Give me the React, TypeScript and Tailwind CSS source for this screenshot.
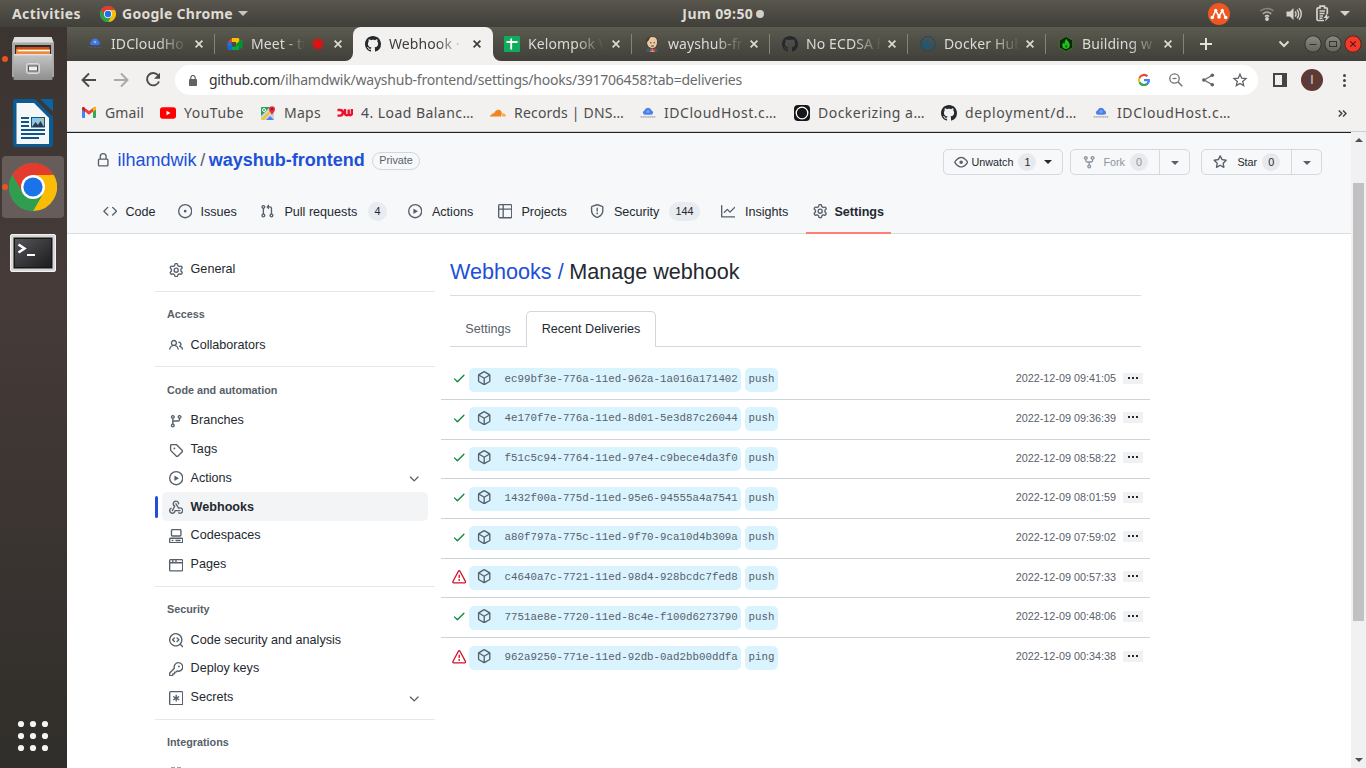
import React, { useLayoutEffect, useRef } from "react";
import type { ReactNode } from "react";

const P = {
  code: "M4.72 3.22a.75.75 0 011.06 1.06L2.06 8l3.72 3.72a.75.75 0 11-1.06 1.06L.47 8.53a.75.75 0 010-1.06l4.25-4.25zm6.56 0a.75.75 0 10-1.06 1.06L13.94 8l-3.72 3.72a.75.75 0 101.06 1.06l4.25-4.25a.75.75 0 000-1.06l-4.25-4.25z",
  issue: "M8 9.5a1.5 1.5 0 100-3 1.5 1.5 0 000 3zM8 0a8 8 0 100 16A8 8 0 008 0zM1.5 8a6.5 6.5 0 1113 0 6.5 6.5 0 01-13 0z",
  pull: "M7.177 3.073L9.573.677A.25.25 0 0110 .854v4.792a.25.25 0 01-.427.177L7.177 3.427a.25.25 0 010-.354zM3.75 2.5a.75.75 0 100 1.5.75.75 0 000-1.5zm-2.25.75a2.25 2.25 0 113 2.122v5.256a2.251 2.251 0 11-1.5 0V5.372A2.25 2.25 0 011.5 3.25zM11 2.5h-1V4h1a1 1 0 011 1v5.628a2.251 2.251 0 101.5 0V5A2.5 2.5 0 0011 2.5zm1 10.25a.75.75 0 111.5 0 .75.75 0 01-1.5 0zM3.75 12a.75.75 0 100 1.5.75.75 0 000-1.5z",
  play: "M1.5 8a6.5 6.5 0 1113 0 6.5 6.5 0 01-13 0zM8 0a8 8 0 100 16A8 8 0 008 0zM6.379 5.227A.25.25 0 006 5.442v5.117a.25.25 0 00.379.214l4.264-2.559a.25.25 0 000-.428L6.379 5.227z",
  table: "M1.75 0A1.75 1.75 0 000 1.75v12.5C0 15.216.784 16 1.75 16h12.5A1.75 1.75 0 0016 14.25V1.75A1.75 1.75 0 0014.25 0H1.75zM1.5 1.75a.25.25 0 01.25-.25H5V5H1.5V1.75zM1.5 6.5v7.75c0 .138.112.25.25.25H5v-8H1.5zm5 0v8h7.75a.25.25 0 00.25-.25V6.5h-8zm8-1.5V1.75a.25.25 0 00-.25-.25H6.5V5h8z",
  shield: "M7.467.133a1.75 1.75 0 011.066 0l5.25 1.68A1.75 1.75 0 0115 3.48V7c0 1.566-.32 3.182-1.303 4.682-.983 1.498-2.585 2.813-5.032 3.855a1.7 1.7 0 01-1.33 0c-2.447-1.042-4.049-2.357-5.032-3.855C1.32 10.182 1 8.566 1 7V3.48a1.75 1.75 0 011.217-1.667l5.25-1.68zm.61 1.429a.25.25 0 00-.153 0l-5.25 1.68a.25.25 0 00-.174.238V7c0 1.358.275 2.666 1.057 3.86.784 1.194 2.121 2.34 4.366 3.297a.2.2 0 00.154 0c2.245-.956 3.582-2.104 4.366-3.298C13.225 9.666 13.5 8.36 13.5 7V3.48a.25.25 0 00-.174-.237l-5.25-1.68zM9 10.5a1 1 0 11-2 0 1 1 0 012 0zm-.25-5.75a.75.75 0 10-1.5 0v3a.75.75 0 001.5 0v-3z",
  graph: "M1.5 1.75a.75.75 0 00-1.5 0v12.5c0 .414.336.75.75.75h14.5a.75.75 0 000-1.5H1.5V1.75zm14.28 2.53a.75.75 0 00-1.06-1.06L10 7.94 7.53 5.47a.75.75 0 00-1.06 0L3.22 8.72a.75.75 0 001.06 1.06L7 7.06l2.47 2.47a.75.75 0 001.06 0l5.25-5.25z",
  gear: "M8 0a8.2 8.2 0 0 1 .701.031C9.444.095 9.99.645 10.16 1.29l.288 1.107c.018.066.079.158.212.224.231.114.454.243.668.386.123.082.233.09.299.071l1.103-.303c.644-.176 1.392.021 1.82.63.27.385.506.792.704 1.218.315.675.111 1.422-.364 1.891l-.814.806c-.049.048-.098.147-.088.294.016.257.016.515 0 .772-.01.147.038.246.088.294l.814.806c.475.469.679 1.216.364 1.891a7.977 7.977 0 0 1-.704 1.217c-.428.61-1.176.807-1.82.63l-1.102-.302c-.067-.019-.177-.011-.3.071a5.909 5.909 0 0 1-.668.386c-.133.066-.194.158-.211.224l-.29 1.106c-.168.646-.715 1.196-1.458 1.26a8.006 8.006 0 0 1-1.402 0c-.743-.064-1.289-.614-1.458-1.26l-.289-1.106c-.018-.066-.079-.158-.212-.224a5.738 5.738 0 0 1-.668-.386c-.123-.082-.233-.09-.299-.071l-1.103.303c-.644.176-1.392-.021-1.82-.63a8.12 8.12 0 0 1-.704-1.218c-.315-.675-.111-1.422.363-1.891l.815-.806c.05-.048.098-.147.088-.294a6.214 6.214 0 0 1 0-.772c.01-.147-.038-.246-.088-.294l-.815-.806C.635 6.045.431 5.298.746 4.623a7.92 7.92 0 0 1 .704-1.217c.428-.61 1.176-.807 1.82-.63l1.102.302c.067.019.177.011.3-.071.214-.143.437-.272.668-.386.133-.066.194-.158.211-.224l.29-1.106C6.009.645 6.556.095 7.299.03 7.53.01 7.764 0 8 0Zm-.571 1.525c-.036.003-.108.036-.137.146l-.289 1.105c-.147.561-.549.967-.998 1.189-.173.086-.34.183-.5.29-.417.278-.97.423-1.529.27l-1.103-.303c-.109-.03-.175.016-.195.045-.22.312-.412.644-.573.99-.014.031-.021.11.059.19l.815.806c.411.406.562.957.53 1.456a4.709 4.709 0 0 0 0 .582c.032.499-.119 1.05-.53 1.456l-.815.806c-.081.08-.073.159-.059.19.162.346.353.677.573.989.02.03.085.076.195.046l1.102-.303c.56-.153 1.113-.008 1.53.27.161.107.328.204.501.29.447.222.85.629.997 1.189l.289 1.105c.029.109.101.143.137.146a6.6 6.6 0 0 0 1.142 0c.036-.003.108-.036.137-.146l.289-1.105c.147-.561.549-.967.998-1.189.173-.086.34-.183.5-.29.417-.278.97-.423 1.529-.27l1.103.303c.109.029.175-.016.195-.045.22-.313.411-.644.573-.99.014-.031.021-.11-.059-.19l-.815-.806c-.411-.406-.562-.957-.53-1.456a4.709 4.709 0 0 0 0-.582c-.032-.499.119-1.05.53-1.456l.815-.806c.081-.08.073-.159.059-.19a6.464 6.464 0 0 0-.573-.989c-.02-.03-.085-.076-.195-.046l-1.102.303c-.56.153-1.113.008-1.53-.27a4.44 4.44 0 0 0-.501-.29c-.447-.222-.85-.629-.997-1.189l-.289-1.105c-.029-.11-.101-.143-.137-.146a6.6 6.6 0 0 0-1.142 0ZM11 8a3 3 0 1 1-6 0 3 3 0 0 1 6 0ZM9.5 8a1.5 1.5 0 1 0-3.001.001A1.5 1.5 0 0 0 9.5 8Z",
  lock: "M4 4v2h-.25A1.75 1.75 0 002 7.75v5.5c0 .966.784 1.75 1.75 1.75h8.5A1.75 1.75 0 0014 13.25v-5.5A1.75 1.75 0 0012.25 6H12V4a4 4 0 10-8 0zm6.5 2V4a2.5 2.5 0 10-5 0v2h5zM12 7.5h.25a.25.25 0 01.25.25v5.5a.25.25 0 01-.25.25h-8.5a.25.25 0 01-.25-.25v-5.5a.25.25 0 01.25-.25H12z",
  people: "M2 5.5a3.5 3.5 0 1 1 5.898 2.549 5.508 5.508 0 0 1 3.034 4.084.75.75 0 1 1-1.482.235 4 4 0 0 0-7.9 0 .75.75 0 0 1-1.482-.236A5.507 5.507 0 0 1 3.102 8.05 3.493 3.493 0 0 1 2 5.5ZM11 4a3.001 3.001 0 0 1 2.22 5.018 5.01 5.01 0 0 1 2.56 3.012.749.749 0 0 1-.885.954.752.752 0 0 1-.549-.514 3.507 3.507 0 0 0-2.522-2.372.75.75 0 0 1-.574-.73v-.352a.75.75 0 0 1 .416-.672A1.5 1.5 0 0 0 11 5.5.75.75 0 0 1 11 4Zm-5.5-.5a2 2 0 1 0-.001 3.999A2 2 0 0 0 5.5 3.5Z",
  branch: "M11.75 2.5a.75.75 0 100 1.5.75.75 0 000-1.5zm-2.25.75a2.25 2.25 0 113 2.122V6A2.5 2.5 0 0110 8.5H6a1 1 0 00-1 1v1.128a2.251 2.251 0 11-1.5 0V5.372a2.25 2.25 0 111.5 0v1.836A2.492 2.492 0 016 7h4a1 1 0 001-1v-.628A2.25 2.25 0 019.5 3.25zM4.25 12a.75.75 0 100 1.5.75.75 0 000-1.5zM3.5 3.25a.75.75 0 111.5 0 .75.75 0 01-1.5 0z",
  tag: "M1 7.775V2.75C1 1.784 1.784 1 2.75 1h5.025c.464 0 .91.184 1.238.513l6.25 6.25a1.75 1.75 0 0 1 0 2.474l-5.026 5.026a1.75 1.75 0 0 1-2.474 0l-6.25-6.25A1.752 1.752 0 0 1 1 7.775Zm1.5 0c0 .066.026.13.073.177l6.25 6.25a.25.25 0 0 0 .354 0l5.025-5.025a.25.25 0 0 0 0-.354l-6.25-6.25a.25.25 0 0 0-.177-.073H2.75a.25.25 0 0 0-.25.25ZM6 5a1 1 0 1 1 0 2 1 1 0 0 1 0-2Z",
  webhook: "M5.5 4.25a2.25 2.25 0 0 1 4.5 0 .75.75 0 0 0 1.5 0 3.75 3.75 0 1 0-6.14 2.889l-2.272 4.258a.75.75 0 0 0 1.324.706L7 7.25a.75.75 0 0 0-.309-1.015A2.25 2.25 0 0 1 5.5 4.25ZM7.364 3.607a.75.75 0 0 1 1.03.257l2.608 4.349a3.75 3.75 0 1 1-.628 6.785.75.75 0 0 1 .752-1.299 2.25 2.25 0 1 0-.033-3.88.75.75 0 0 1-1.03-.256L7.107 4.636a.75.75 0 0 1 .257-1.03ZM2.9 8.776A.75.75 0 0 1 2.625 9.8 2.25 2.25 0 1 0 6 11.75a.75.75 0 0 1 .75-.751h5.5a.75.75 0 0 1 0 1.5H7.425a3.751 3.751 0 1 1-5.55-3.998.75.75 0 0 1 1.024.274Z",
  codespaces: "M0 11.25c0-.966.784-1.75 1.75-1.75h12.5c.966 0 1.75.784 1.75 1.75v3A1.75 1.75 0 0 1 14.25 16H1.75A1.75 1.75 0 0 1 0 14.25Zm2-9.5C2 .784 2.784 0 3.75 0h8.5C13.216 0 14 .784 14 1.75v5a1.75 1.75 0 0 1-1.75 1.75h-8.5A1.75 1.75 0 0 1 2 6.75Zm1.75-.25a.25.25 0 0 0-.25.25v5c0 .138.112.25.25.25h8.5a.25.25 0 0 0 .25-.25v-5a.25.25 0 0 0-.25-.25Zm-2 9.5a.25.25 0 0 0-.25.25v3c0 .138.112.25.25.25h12.5a.25.25 0 0 0 .25-.25v-3a.25.25 0 0 0-.25-.25ZM7 12.75a.75.75 0 0 1 .75-.75h4.5a.75.75 0 0 1 0 1.5h-4.5a.75.75 0 0 1-.75-.75Zm-4 0a.75.75 0 0 1 .75-.75h.5a.75.75 0 0 1 0 1.5h-.5a.75.75 0 0 1-.75-.75Z",
  browser: "M0 2.75C0 1.784.784 1 1.75 1h12.5c.966 0 1.75.784 1.75 1.75v10.5A1.75 1.75 0 0 1 14.25 15H1.75A1.75 1.75 0 0 1 0 13.25ZM14.5 6h-13v7.25c0 .138.112.25.25.25h12.5a.25.25 0 0 0 .25-.25Zm-6-3.5v2h6V2.75a.25.25 0 0 0-.25-.25ZM5 2.5v2h2v-2Zm-3.25 0a.25.25 0 0 0-.25.25V4.5h2v-2Z",
  codescan: "M8.47 4.97a.75.75 0 0 0 0 1.06L9.94 7.5 8.47 8.97a.75.75 0 1 0 1.06 1.06l2-2a.75.75 0 0 0 0-1.06l-2-2a.75.75 0 0 0-1.06 0ZM6.53 6.03a.75.75 0 0 0-1.06-1.06l-2 2a.75.75 0 0 0 0 1.06l2 2a.75.75 0 1 0 1.06-1.06L5.06 7.5l1.47-1.47ZM12.246 13.307a7.501 7.501 0 1 1 1.06-1.06l2.474 2.473a.749.749 0 1 1-1.06 1.06l-2.474-2.473ZM1.5 7.5a6.002 6.002 0 0 0 3.608 5.504 6.002 6.002 0 0 0 6.486-1.117.748.748 0 0 1 .292-.293A6 6 0 1 0 1.5 7.5Z",
  key: "M10.5 0a5.499 5.499 0 1 1-1.288 10.848l-.932.932a.749.749 0 0 1-.53.22H7v.75a.749.749 0 0 1-.22.53l-.5.5a.749.749 0 0 1-.53.22H5v.75a.749.749 0 0 1-.22.53l-.5.5a.749.749 0 0 1-.53.22h-2A1.75 1.75 0 0 1 0 14.25v-2c0-.199.079-.389.22-.53l4.932-4.932A5.5 5.5 0 0 1 10.5 0Zm-4 5.5c-.001.431.069.86.205 1.269a.75.75 0 0 1-.181.768L1.5 12.56v1.69c0 .138.112.25.25.25h1.69l.06-.06v-1.19a.75.75 0 0 1 .75-.75h1.19l.06-.06v-1.19a.75.75 0 0 1 .75-.75h1.19l1.023-1.025a.75.75 0 0 1 .768-.18A4 4 0 1 0 6.5 5.5ZM11 6a1 1 0 1 1 0-2 1 1 0 0 1 0 2Z",
  asterisk: "M1.75 0A1.75 1.75 0 000 1.75v12.5C0 15.216.784 16 1.75 16h12.5A1.75 1.75 0 0016 14.25V1.75A1.75 1.75 0 0014.25 0H1.75zm-.25 1.75a.25.25 0 01.25-.25h12.5a.25.25 0 01.25.25v12.5a.25.25 0 01-.25.25H1.75a.25.25 0 01-.25-.25V1.75zM8 4a.75.75 0 01.75.75V6.7l1.69-.975a.75.75 0 01.75 1.3L9.5 8l1.69.976a.75.75 0 01-.75 1.298L8.75 9.3v1.951a.75.75 0 01-1.5 0V9.299l-1.69.976a.75.75 0 01-.75-1.3L6.5 8l-1.69-.975a.75.75 0 01.75-1.3l1.69.976V4.75A.75.75 0 018 4z",
  box: "M8.878.392a1.75 1.75 0 00-1.756 0l-5.25 3.045A1.75 1.75 0 001 4.951v6.098c0 .624.332 1.2.872 1.514l5.25 3.045a1.75 1.75 0 001.756 0l5.25-3.045c.54-.313.872-.89.872-1.514V4.951c0-.624-.332-1.2-.872-1.514L8.878.392zM7.875 1.69a.25.25 0 01.25 0l4.63 2.685L8 7.133 3.245 4.375l4.63-2.685zM2.5 5.677v5.372c0 .09.047.171.125.216l4.625 2.683V8.432L2.5 5.677zm6.25 8.271l4.625-2.683a.25.25 0 00.125-.216V5.677L8.75 8.432v5.516z",
  alert: "M8.22 1.754a.25.25 0 00-.44 0L1.698 13.132a.25.25 0 00.22.368h12.164a.25.25 0 00.22-.368L8.22 1.754zm-1.763-.707c.659-1.234 2.427-1.234 3.086 0l6.082 11.378A1.75 1.75 0 0114.082 15H1.918a1.75 1.75 0 01-1.543-2.575L6.457 1.047zM9 11a1 1 0 11-2 0 1 1 0 012 0zm-.25-5.25a.75.75 0 00-1.5 0v2.5a.75.75 0 001.5 0v-2.5z",
  check: "M13.78 4.22a.75.75 0 010 1.06l-7.25 7.25a.75.75 0 01-1.06 0L2.22 9.28a.75.75 0 011.06-1.06L6 10.94l6.72-6.72a.75.75 0 011.06 0z",
  eye: "M8 2c1.981 0 3.671.992 4.933 2.078 1.27 1.091 2.187 2.345 2.637 3.023a1.62 1.62 0 0 1 0 1.798c-.45.678-1.367 1.932-2.637 3.023C11.67 13.008 9.981 14 8 14c-1.981 0-3.671-.992-4.933-2.078C1.797 10.83.88 9.576.43 8.898a1.62 1.62 0 0 1 0-1.798c.45-.677 1.367-1.931 2.637-3.022C4.33 2.992 6.019 2 8 2ZM1.679 7.932a.12.12 0 0 0 0 .136c.411.622 1.241 1.75 2.366 2.717C5.176 11.758 6.527 12.5 8 12.5c1.473 0 2.825-.742 3.955-1.715 1.124-.967 1.954-2.096 2.366-2.717a.12.12 0 0 0 0-.136c-.412-.621-1.242-1.75-2.366-2.717C10.824 4.242 9.473 3.5 8 3.5c-1.473 0-2.825.742-3.955 1.715-1.124.967-1.954 2.096-2.366 2.717ZM8 10a2 2 0 1 1-.001-3.999A2 2 0 0 1 8 10Z",
  fork: "M5 3.25a.75.75 0 11-1.5 0 .75.75 0 011.5 0zm0 2.122a2.25 2.25 0 10-1.5 0v.878A2.25 2.25 0 005.75 8.5h1.5v2.128a2.251 2.251 0 101.5 0V8.5h1.5a2.25 2.25 0 002.25-2.25v-.878a2.25 2.25 0 10-1.5 0v.878a.75.75 0 01-.75.75h-4.5A.75.75 0 015 6.25v-.878zm3.75 7.378a.75.75 0 11-1.5 0 .75.75 0 011.5 0zm3-8.75a.75.75 0 100-1.5.75.75 0 000 1.5z",
  star: "M8 .25a.75.75 0 01.673.418l1.882 3.815 4.21.612a.75.75 0 01.416 1.279l-3.046 2.97.719 4.192a.75.75 0 01-1.088.791L8 12.347l-3.766 1.98a.75.75 0 01-1.088-.79l.72-4.194L.818 6.374a.75.75 0 01.416-1.28l4.21-.611L7.327.668A.75.75 0 018 .25zm0 2.445L6.615 5.5a.75.75 0 01-.564.41l-3.097.45 2.24 2.184a.75.75 0 01.216.664l-.528 3.084 2.769-1.456a.75.75 0 01.698 0l2.77 1.456-.53-3.084a.75.75 0 01.216-.664l2.24-2.183-3.096-.45a.75.75 0 01-.564-.41L8 2.694v.001z",
  github: "M8 0C3.58 0 0 3.58 0 8c0 3.54 2.29 6.53 5.47 7.59.4.07.55-.17.55-.38 0-.19-.01-.82-.01-1.49-2.01.37-2.53-.49-2.69-.94-.09-.23-.48-.94-.82-1.13-.28-.15-.68-.52-.01-.53.63-.01 1.08.58 1.23.82.72 1.21 1.87.87 2.33.66.07-.52.28-.87.51-1.07-1.78-.2-3.64-.89-3.64-3.95 0-.87.31-1.59.82-2.15-.08-.2-.36-1.02.08-2.12 0 0 .67-.21 2.2.82.64-.18 1.32-.27 2-.27.68 0 1.36.09 2 .27 1.53-1.04 2.2-.82 2.2-.82.44 1.1.16 1.92.08 2.12.51.56.82 1.27.82 2.15 0 3.07-1.87 3.75-3.65 3.95.29.25.54.73.54 1.48 0 1.07-.01 1.93-.01 2.2 0 .21.15.46.55.38A8.013 8.013 0 0016 8c0-4.42-3.58-8-8-8z",
  chevron: "M12.78 6.22a.75.75 0 010 1.06l-4.25 4.25a.75.75 0 01-1.06 0L3.22 7.28a.75.75 0 011.06-1.06L8 9.94l3.72-3.72a.75.75 0 011.06 0z",
};

function Oct({ d, className = "size-[14.4px] fill-[#57606a]" }: { d: string; className?: string }) {
  return (
    <svg viewBox="0 0 16 16" className={`block shrink-0 ${className}`}>
      <path fillRule="evenodd" d={d} />
    </svg>
  );
}

/* Single-line label whose tracking is adjusted so that it spans a given width. */
function Fit({ w, className = "", children }: { w: number; className?: string; children: string }) {
  const ref = useRef<HTMLSpanElement>(null);
  useLayoutEffect(() => {
    const el = ref.current;
    if (!el) return;
    el.style.letterSpacing = "0px";
    const natural = el.getBoundingClientRect().width;
    el.style.letterSpacing = `${(w - natural) / children.length}px`;
  }, [w, children]);
  return (
    <span className={`block shrink-0 ${className}`} style={{ width: w }}>
      <span ref={ref} className="inline-block whitespace-nowrap">
        {children}
      </span>
    </span>
  );
}

function ChromeLogo({ className }: { className: string }) {
  return (
    <svg viewBox="0 0 48 48" className={`block shrink-0 ${className}`}>
      <circle cx="24" cy="24" r="24" fill="#34a853" />
      <path d="M3.200 12A24 24 0 0 1 44.800 12H24z" fill="#e33b2e" />
      <path d="M24 12h20.800A24 24 0 0 1 24 48l10.400-18z" fill="#fbbc05" />
      <path d="M3.200 12 13.600 30 24 24 24 12z" fill="#e33b2e" />
      <path d="M3.200 12A24 24 0 0 0 24 48l10.400-18A12 12 0 0 1 13.600 30z" fill="#2f9e4f" />
      <circle cx="24" cy="24" r="12" fill="#fff" />
      <circle cx="24" cy="24" r="9.600" fill="#1a73e8" />
    </svg>
  );
}

const CloudHost = () => (
  <svg viewBox="0 0 16 16" className="block size-4 shrink-0">
    <path d="M5 9.700a2.200 2.200 0 0 1-.6-4.300A3.800 3.800 0 0 1 11.600 5.400a2.200 2.200 0 0 1-.6 4.300z" fill="#4a80ea" />
    <circle cx="8" cy="6.500" r="1.500" fill="#78a3f5" />
    <path d="M.5 11.800h15" stroke="#8a8f9c" strokeWidth="1.800" strokeDasharray="1.500 .4" opacity=".6" />
  </svg>
);

const TabCloud = () => (
  <svg viewBox="0 0 16 16" className="block size-4 shrink-0">
    <path d="M5 9a1.900 1.900 0 0 1-.6-3.700A3.700 3.700 0 0 1 11.600 5.300a1.900 1.900 0 0 1-.6 3.700z" fill="#3f78e6" />
    <circle cx="8" cy="6" r="1.300" fill="#8fb2f5" />
    <path d="M1.500 11.300h13" stroke="#4b5267" strokeWidth="1.500" />
  </svg>
);

const MeetIcon = () => (
  <svg viewBox="0 0 16 16" className="block size-4 shrink-0">
    <path d="M.5 6.500 5 2v4.500z" fill="#ea4335" />
    <path d="M5 2h6a1.300 1.300 0 0 1 1.300 1.300V8L9 8V6H5z" fill="#fbbc04" />
    <path d="M.5 6.500h4.300v4.300H.5z" fill="#1a73e8" />
    <path d="M.5 10.500H5V14H1.500a1 1 0 0 1-1-1z" fill="#1967d2" />
    <path d="M5 10.500h4V8l3.300 2.500V12.700a1.300 1.300 0 0 1-1.300 1.300H5z" fill="#00ac47" />
    <path d="M9 8l5.700-4.600c.4-.3.8 0 .8.400v8.600c0 .4-.5.700-.8.400z" fill="#00962d" />
    <path d="M5 6.300h4v4.200H5z" fill="#4a483f" />
  </svg>
);

const SheetsIcon = () => (
  <svg viewBox="0 0 16 16" className="block size-4 shrink-0">
    <rect width="16" height="16" rx="1" fill="#0fac5c" />
    <path d="M2.500 6h11M7.200 2.500v11" stroke="#fff" strokeWidth="1.800" />
  </svg>
);

const JenkinsIcon = () => (
  <svg viewBox="0 0 16 16" className="block size-4 shrink-0">
    <path d="M2 16c0-4 2-5 6-5s6 1.500 6 5z" fill="#3d5a66" />
    <path d="M2.500 6C2.300 2.500 4.500.5 8 .5s5.700 2 5.500 5.600C13.300 10 11.500 12.500 8.200 12.500S2.700 9.500 2.500 6z" fill="#e9c9a4" stroke="#3a2b22" strokeWidth=".8" />
    <path d="M2.500 6.800C1.900 3 4 .6 7.500.5 5.500 1.800 5.200 3.800 4.200 5z" fill="#4c3a30" />
    <path d="M6 6.800h1.500M9.500 6.800H11M7 10h3" stroke="#3a2b22" strokeWidth=".9" />
    <path d="M8 12.500 5.500 15.500h5.500z" fill="#fff" />
    <path d="m6 12.500 2.500 1 2.800-1v3.200l-2.800-1.200-2.500 1.200z" fill="#d33833" />
  </svg>
);

const DockerIcon = () => (
  <svg viewBox="0 0 16 16" className="block size-4 shrink-0">
    <circle cx="8" cy="8" r="7.300" fill="none" stroke="#1d4e68" strokeWidth="1.300" />
    <path d="M2.500 7.500h8.200c.2-1 .9-1.500 1.200-1.600.6.500.8 1.100.7 1.500.5 0 1 0 1.200.2-.3.900-1.200 1.200-2 1.200-1 2.600-2.800 3.600-5.100 3.600-3 0-4.500-2-4.200-4.900z" fill="#1d5878" />
    <path d="M4 5.600h5v1.500H4zM5.500 3.800h3v1.500h-3z" fill="#1d5878" />
  </svg>
);

const HexIcon = () => (
  <svg viewBox="0 0 16 16" className="block size-4 shrink-0">
    <path d="M8 .5 14.700 4.200v7.600L8 15.500 1.300 11.800V4.200z" fill="#10240f" stroke="#36761f" strokeWidth="1" />
    <path d="M8.500 2.800c.3 2 3.200 3.500 3.200 6.300A3.700 3.700 0 0 1 8 12.900a3.700 3.700 0 0 1-3.700-3.800c0-1.200.7-2 1.200-2.500.1.800.5 1.200 1 1.300C6.500 6 7.300 4 8.500 2.800z" fill="#1fc41a" />
    <path d="M8.500 8.500c.6.800.9 1.300.9 1.900a1.200 1.200 0 0 1-2.400 0c0-.6.500-1.100 1.500-1.900z" fill="#0c6f0c" />
  </svg>
);

const CloseX = ({ className }: { className: string }) => (
  <svg viewBox="0 0 8 8" className={`block size-2 shrink-0 ${className}`}>
    <path d="M.6.6l6.800 6.800M7.400.6.6 7.400" strokeWidth="1.700" fill="none" />
  </svg>
);

function Tab({
  icon,
  title,
  active = false,
  rec = false,
  sep = true,
  w = "w-[138px]",
  tw = "w-[76px]",
  close = "pr-[11px]",
}: {
  icon: ReactNode;
  title: string;
  active?: boolean;
  rec?: boolean;
  sep?: boolean;
  w?: string;
  tw?: string;
  close?: string;
}) {
  return (
    <div className={`relative flex h-[34px] shrink-0 items-center pl-3 ${w} ${active ? "rounded-t-[8px] bg-[#f2f1f0]" : ""}`}>
      {active && (
        <>
          <svg viewBox="0 0 8 8" className="absolute -left-2 bottom-0 size-2"><path d="M8 0v8H0a8 8 0 0 0 8-8z" fill="#f2f1f0" /></svg>
          <svg viewBox="0 0 8 8" className="absolute -right-2 bottom-0 size-2"><path d="M0 0v8h8a8 8 0 0 1-8-8z" fill="#f2f1f0" /></svg>
        </>
      )}
      {icon}
      <div
        className={`ml-2 shrink-0 whitespace-nowrap text-[14px] leading-[20px] tracking-[0.1px] [mask-image:linear-gradient(to_right,black_62%,transparent_100%)] ${tw} ${active ? "text-[#3c3c3c]" : "text-[#dcdad5]"}`}
      >
        {title}
      </div>
      {rec && (
        <svg viewBox="0 0 12 12" className="ml-[7px] block size-3 shrink-0">
          <circle cx="6" cy="6" r="5.500" fill="none" stroke="#e60f0f" strokeWidth="1" />
          <circle cx="6" cy="6" r="4" fill="#e60f0f" />
        </svg>
      )}
      <div className={`flex grow items-center justify-end ${close}`}>
        <CloseX className={active ? "stroke-[#3c3c3c]" : "stroke-[#dcdad5]"} />
      </div>
      {sep && <div className="h-5 w-px bg-[#85837b]" />}
    </div>
  );
}

function Bookmark({ icon, label, w, mr = "mr-4" }: { icon: ReactNode; label: string; w: number; mr?: string }) {
  return (
    <div className={`flex shrink-0 items-center gap-2 ${mr}`}>
      {icon}
      <Fit w={w}>{label}</Fit>
    </div>
  );
}

const Sep = () => <div className="h-px w-[280px] shrink-0 bg-[#e4e8ec]" />;

function SideItem({ d, label, open = false, active = false }: { d: string; label: string; open?: boolean; active?: boolean }) {
  return (
    <div className="flex h-[28.8px] shrink-0 items-center">
      <div className={`h-[21.600px] w-[3px] rounded-sm ${active ? "bg-[#2050d8]" : ""}`} />
      <div className={`ml-[4px] flex h-[28.8px] w-[266px] items-center rounded-[5px] pl-[7px] ${active ? "bg-[#f3f4f6]" : ""}`}>
        <div className="pt-px">
          <Oct d={d} />
        </div>
        <span className={`ml-[7.200px] grow pb-[0.600px] text-[12.6px] leading-[18px] text-[#24292f] ${active ? "font-bold" : ""}`}>{label}</span>
        {open && (
          <div className="pr-[7px] pt-px">
            <Oct d={P.chevron} />
          </div>
        )}
      </div>
    </div>
  );
}

const SideHead = ({ children }: { children: string }) => (
  <div className="pl-3 text-[10.8px] font-bold leading-[16px] text-[#57606a]">{children}</div>
);

const Caret = ({ className = "border-t-[#24292f]" }: { className?: string }) => (
  <div className={`h-0 w-0 border-x-[4px] border-t-[4px] border-x-transparent ${className}`} />
);

const deliveries = [
  { ok: true, id: "ec99bf3e-776a-11ed-962a-1a016a171402", ev: "push", at: "2022-12-09 09:41:05" },
  { ok: true, id: "4e170f7e-776a-11ed-8d01-5e3d87c26044", ev: "push", at: "2022-12-09 09:36:39" },
  { ok: true, id: "f51c5c94-7764-11ed-97e4-c9bece4da3f0", ev: "push", at: "2022-12-09 08:58:22" },
  { ok: true, id: "1432f00a-775d-11ed-95e6-94555a4a7541", ev: "push", at: "2022-12-09 08:01:59" },
  { ok: true, id: "a80f797a-775c-11ed-9f70-9ca10d4b309a", ev: "push", at: "2022-12-09 07:59:02" },
  { ok: false, id: "c4640a7c-7721-11ed-98d4-928bcdc7fed8", ev: "push", at: "2022-12-09 00:57:33" },
  { ok: true, id: "7751ae8e-7720-11ed-8c4e-f100d6273790", ev: "push", at: "2022-12-09 00:48:06" },
  { ok: false, id: "962a9250-771e-11ed-92db-0ad2bb00ddfa", ev: "ping", at: "2022-12-09 00:34:38" },
];

function TopBar() {
  return (
    <div className="grid h-[27px] shrink-0 grid-cols-3 items-center bg-linear-to-b from-[#59564e] to-[#413f3a] text-[14px] font-bold leading-[20px] text-[#dfdbd2]">
      <div className="flex items-center pl-3">
        <Fit w={69}>Activities</Fit>
        <ChromeLogo className="ml-[19px] size-4" />
        <Fit w={111} className="ml-[6px]">Google Chrome</Fit>
        <div className="ml-[5px] h-0 w-0 border-x-[5px] border-t-[5px] border-x-transparent border-t-[#c9c5bc]" />
      </div>
      <div className="flex items-center pl-[227px]">
        <Fit w={71}>Jum 09:50</Fit>
        <div className="ml-[3px] size-2 rounded-full bg-[#d3d0c9]" />
      </div>
      <div className="flex items-center justify-end pr-4">
        <svg viewBox="0 0 22 22" className="size-[22px]">
          <circle cx="11" cy="11" r="11" fill="#ee5622" />
          <path d="M4.500 14.500 7.700 7.500l3.300 6 3.300-6 3.200 7" fill="none" stroke="#fff" strokeWidth="1.600" />
          <g fill="#fff"><circle cx="4.300" cy="14.500" r="1.800" /><circle cx="11" cy="14" r="1.800" /><circle cx="17.700" cy="14.500" r="1.800" /><circle cx="7.700" cy="7.200" r="1.500" /><circle cx="14.300" cy="7.200" r="1.500" /></g>
        </svg>
        <svg viewBox="0 0 16 16" className="ml-[29px] size-4" fill="none" strokeWidth="1.600">
          <path d="M1.500 5a9.500 9.500 0 0 1 13 0" stroke="#86837b" />
          <path d="M3.800 7.800a6.200 6.200 0 0 1 8.400 0" stroke="#aaa79f" />
          <path d="M6 10.500a3.200 3.200 0 0 1 4 0" stroke="#d6d3cb" />
          <circle cx="8" cy="13" r="1.900" fill="#d6d3cb" />
        </svg>
        <svg viewBox="0 0 16 16" className="ml-[11px] size-4">
          <path d="M.5 5.500h3.500L7.500 2v12L4 10.500H.5z" fill="#d6d3cb" />
          <path d="M9 5.500a3.500 3.500 0 0 1 0 5M11 3.800a6 6 0 0 1 0 8.400M13 2.200a8.500 8.500 0 0 1 0 11.600" fill="none" stroke="#d6d3cb" strokeWidth="1.400" />
        </svg>
        <svg viewBox="0 0 16 17" className="ml-[13px] h-[17px] w-4">
          <path d="M9 15.500H3.200A1.200 1.200 0 0 1 2 14.300V4a1.200 1.200 0 0 1 1.200-1.200H5V1.200h4.500v1.600h1.600A1.200 1.200 0 0 1 12.300 4v5" fill="none" stroke="#d6d3cb" strokeWidth="1.700" />
          <path d="M4.500 6h5.500M4.500 8.500h5M4.500 11h3.500M4.500 13.300h3" stroke="#d6d3cb" strokeWidth="1.500" />
          <path d="M12.500 8 8.500 13h2.500l-1 3.500 4.800-5H12z" fill="#d6d3cb" />
        </svg>
        <div className="ml-[9px] h-0 w-0 border-x-[5px] border-t-[5px] border-x-transparent border-t-[#d6d3cb]" />
      </div>
    </div>
  );
}

function Dock() {
  return (
    <div className="flex w-[67px] shrink-0 flex-col bg-linear-to-b from-[#3b3431] via-[#463b39] via-35% to-[#302e2a]">
      <div className="flex h-[64px] items-center">
        <div className="ml-[2px] size-[6px] rounded-full bg-[#e95420]" />
        <svg viewBox="0 0 42 44" className="ml-[4px] h-[44px] w-[42px]">
          <defs>
            <linearGradient id="cab" x1="0" y1="0" x2="0" y2="1"><stop offset="0" stopColor="#c6c6c6" /><stop offset="1" stopColor="#8f8f8f" /></linearGradient>
          </defs>
          <path d="M2.500 0h37L42 6v34H0V6z" fill="#a8a8a8" />
          <path d="M2.500 0h37l2 5.500H.5z" fill="#dedede" />
          <rect x="3" y="8" width="36" height="11" fill="#2e2a28" />
          <rect x="4.500" y="10" width="33" height="3" fill="#c8501e" />
          <rect x="4" y="12" width="34" height="6" fill="#ef8a3c" />
          <rect x="6" y="13" width="32" height="1.300" fill="#fff" />
          <rect x="1.500" y="17" width="39" height="26" rx="1" fill="url(#cab)" />
          <path d="M2 17.800h38" stroke="#ececec" />
          <rect x="14.500" y="26.500" width="13" height="10" rx="2" fill="#bdbdbd" stroke="#dcdcdc" />
          <rect x="16.500" y="29" width="9" height="5" fill="#eee" stroke="#555" />
        </svg>
      </div>
      <div className="flex h-[64px] items-center pl-[13px]">
        <svg viewBox="0 0 40 48" className="h-[48px] w-[40px]">
          <path d="M2.500 0H22l18 18v27.500A2.500 2.500 0 0 1 37.500 48h-35A2.500 2.500 0 0 1 0 45.500v-43A2.500 2.500 0 0 1 2.500 0z" fill="#0a5a94" />
          <path d="M27 0h11.500A1.500 1.500 0 0 1 40 1.500V12.500z" fill="#0a63a3" />
          <path d="M3.500 4H21l15 15v26H3.500z" fill="#f5f6f7" />
          <path d="M8 19h8M8 23h8M8 27h8M8 31h24M8 35h24M8 39h18" stroke="#0f5588" strokeWidth="2" />
          <rect x="18.500" y="18.500" width="13" height="9.500" fill="#8cc4e8" stroke="#0f5588" />
          <path d="m19 28 3.500-5 2.500 3 2.500-4 3.500 6z" fill="#2f3b42" />
          <circle cx="29.500" cy="20.500" r="1.300" fill="#f5b91e" />
        </svg>
      </div>
      <div className="ml-[2px] mt-[1px] flex h-[62px] w-[62px] items-center rounded-[4px] bg-[#665d5b]">
        <div className="size-[6px] rounded-full bg-[#e95420]" />
        <ChromeLogo className="ml-[1px] size-12" />
      </div>
      <div className="flex h-[70px] items-center pl-[10px]">
        <svg viewBox="0 0 46 38" className="h-[38px] w-[46px]">
          <defs>
            <linearGradient id="scr" x1="0" y1="0" x2="1" y2="1"><stop offset="0" stopColor="#55555a" /><stop offset="1" stopColor="#1c1c1e" /></linearGradient>
          </defs>
          <rect x=".5" y=".5" width="45" height="37" rx="1.500" fill="#d8d8d8" stroke="#f2f2f2" />
          <rect x="3.500" y="3.500" width="39" height="31" fill="#171717" />
          <rect x="5" y="5" width="36" height="28" fill="url(#scr)" />
          <path d="m8.500 10.500 6 4-6 4" fill="none" stroke="#fff" strokeWidth="2.500" />
          <path d="M17 21h8" stroke="#fff" strokeWidth="2" />
        </svg>
      </div>
      <div className="mt-auto flex h-[62px] items-start pl-[17px]">
        <svg viewBox="0 0 32 32" className="mt-[14px] size-8" fill="#f4f4f4">
          {[4, 16, 28].map((y) => [4, 16, 28].map((x) => <circle key={`${x}-${y}`} cx={x} cy={y} r="3.100" />))}
        </svg>
      </div>
    </div>
  );
}

function TabStrip() {
  return (
    <div className="flex h-[34px] shrink-0 items-center bg-linear-to-b from-[#5c5b50] to-[#403f39] pl-[9px]">
      <Tab icon={<div className="-ml-px"><TabCloud /></div>} title="IDCloudHo" w="w-[139px]" />
      <Tab icon={<MeetIcon />} title="Meet - tu" rec sep={false} tw="w-[54px]" />
      <Tab icon={<Oct d={P.github} className="size-4 fill-[#24292f]" />} title="Webhook ·" active sep={false} w="w-[140px]" close="pr-[12px]" />
      <Tab icon={<div className="-ml-px"><SheetsIcon /></div>} title="Kelompok W" w="w-[139px]" />
      <Tab icon={<JenkinsIcon />} title="wayshub-fr" />
      <Tab icon={<Oct d={P.github} className="size-4 fill-[#24292f]" />} title="No ECDSA h" />
      <Tab icon={<DockerIcon />} title="Docker Hub" />
      <Tab icon={<HexIcon />} title="Building w" />
      <svg viewBox="0 0 12 12" className="ml-4 size-3"><path d="M6 0v12M0 6h12" stroke="#e4e2dd" strokeWidth="2" /></svg>
      <div className="ml-auto flex items-center pr-[3px]">
        <svg viewBox="0 0 12 8" className="mr-[13px] h-2 w-3"><path d="m1.500 1.500 4.500 4.500 4.500-4.500" fill="none" stroke="#dcdad5" strokeWidth="2" /></svg>
        <svg viewBox="0 0 60 20" className="h-5 w-[60px]">
          <defs><linearGradient id="wb" x1="0" y1="0" x2="0" y2="1"><stop offset="0" stopColor="#8a8880" /><stop offset="1" stopColor="#66645d" /></linearGradient></defs>
          <circle cx="10" cy="10" r="8.500" fill="#2d2c28" /><circle cx="10" cy="10" r="7.700" fill="url(#wb)" />
          <circle cx="30" cy="10" r="8.500" fill="#2d2c28" /><circle cx="30" cy="10" r="7.700" fill="url(#wb)" />
          <circle cx="50" cy="10" r="8.500" fill="#5c1a12" /><circle cx="50" cy="10" r="7.700" fill="#f03a2a" />
          <path d="M6.500 10.500h7" stroke="#33322e" /><rect x="26.500" y="7.500" width="7" height="5" fill="none" stroke="#33322e" />
          <path d="m47.300 7.300 5.400 5.400m0-5.400-5.400 5.400" stroke="#5c1209" strokeWidth="1.100" />
        </svg>
      </div>
    </div>
  );
}

function Toolbar() {
  return (
    <div className="flex h-[38px] shrink-0 items-center bg-[#f2f1f0] pl-[14px]">
      <svg viewBox="0 0 16 16" className="size-4" fill="none" stroke="#4a4a4a" strokeWidth="1.900"><path d="M15 8H2M8 1.500 1.500 8 8 14.500" /></svg>
      <svg viewBox="0 0 16 16" className="ml-4 size-4" fill="none" stroke="#aaa9a8" strokeWidth="1.900"><path d="M1 8h13M8 1.500 14.500 8 8 14.500" /></svg>
      <svg viewBox="0 0 16 16" className="ml-4 size-4"><path d="M13 3.200A6.200 6.200 0 1 0 14 9.500" fill="none" stroke="#4a4a4a" strokeWidth="1.900" /><path d="M15 .8v6H9z" fill="#4a4a4a" /></svg>
      <div className="ml-[14px] flex h-[30px] w-[1083px] items-center rounded-full bg-white pl-[14px] pr-[10px]">
        <svg viewBox="0 0 8 11" className="h-[11px] w-2"><rect y="4" width="8" height="7" rx=".8" fill="#5f6368" /><path d="M1.800 4.500V2.700a2.200 2.200 0 0 1 4.400 0v1.800" fill="none" stroke="#5f6368" strokeWidth="1.200" /></svg>
        <div className="ml-3 flex text-[14px] leading-[20px]">
          <Fit w={71} className="text-[#333]">github.com</Fit>
          <Fit w={462} className="text-[#6b6b6b]">/ilhamdwik/wayshub-frontend/settings/hooks/391706458?tab=deliveries</Fit>
        </div>
        <div className="ml-auto flex items-center gap-4">
          <svg viewBox="0 0 48 48" className="size-4">
            <path d="M41.600 21H24v7h10.500C33.200 32.500 29.300 36 24 36a12 12 0 0 1-8.300-3.400l-4.600 4.400A18 18 0 0 0 24 42c10.500 0 18-7.500 18-18 0-1-.1-2-.4-3z" fill="#4285f4" />
            <path d="M36.500 37.500 31 33.600C29 35.200 26.700 36 24 36c-5.200 0-9.600-3.300-11.300-8l-4.900 4A18 18 0 0 0 24 42c4.900 0 9.200-1.600 12.500-4.500z" fill="#34a853" />
            <path d="M12.700 28a12 12 0 0 1 0-8L7.800 16a18 18 0 0 0 0 16z" fill="#fbbc05" />
            <path d="M24 12c3 0 5.800 1.100 7.900 3l4.800-4.700A18 18 0 0 0 7.800 16l4.900 4c1.700-4.700 6.100-8 11.300-8z" fill="#ea4335" />
          </svg>
          <svg viewBox="0 0 16 16" className="size-4" fill="none" stroke="#6f7276"><circle cx="6.500" cy="6.500" r="4.700" strokeWidth="1.300" /><path d="M4.500 6.500h4" strokeWidth="1.200" /><path d="m10 10 4.300 4.300" strokeWidth="1.500" /></svg>
          <svg viewBox="0 0 16 16" className="size-4"><path d="M12 3.500 4 8l8 4.500" fill="none" stroke="#5f6368" strokeWidth="1.200" /><g fill="#5f6368"><circle cx="12.300" cy="3.300" r="1.800" /><circle cx="3.800" cy="8" r="1.800" /><circle cx="12.300" cy="12.700" r="1.800" /></g></svg>
          <svg viewBox="0 0 16 16" className="size-4"><path d="m8 2.200 1.700 4 4.300.4-3.300 2.800 1 4.200L8 11.400l-3.700 2.200 1-4.200L2 6.600l4.300-.4z" fill="none" stroke="#5f6368" strokeWidth="1.300" /></svg>
        </div>
      </div>
      <div className="ml-[15px] h-[14px] w-[14px] border-2 border-r-[5px] border-[#454545]" />
      <div className="ml-[14px] flex size-[22px] items-center justify-center rounded-full bg-[#5d3a36] font-['Liberation_Sans',sans-serif] text-[12px] text-[#dcd3d1]">I</div>
      <div className="ml-[20px] flex flex-col gap-[2px]">
        <div className="size-[3px] rounded-full bg-[#454545]" />
        <div className="size-[3px] rounded-full bg-[#454545]" />
        <div className="size-[3px] rounded-full bg-[#454545]" />
      </div>
    </div>
  );
}

function Bookmarks() {
  return (
    <div className="flex h-[32px] shrink-0 items-center bg-[#f2f1f0] pb-1 pl-[14px] text-[14px] leading-[20px] text-[#4d4d4d]">
      <Bookmark w={39} label="Gmail" icon={
        <svg viewBox="0 0 16 16" className="size-4"><path d="M1 4h3v9H2a1 1 0 0 1-1-1z" fill="#4285f4" /><path d="M12 4h3v8a1 1 0 0 1-1 1h-2z" fill="#34a853" /><path d="M1 4.300V3.500c0-1.300 1.400-1.800 2.300-1.100L8 6l4.700-3.600c.9-.7 2.300-.2 2.300 1.100v.8L8 9.700z" fill="#ea4335" /><path d="M1 4.500V3.500A1.400 1.400 0 0 1 3.300 2.400L4 3v3.700z" fill="#c5221f" /><path d="M15 4.500V3.500a1.400 1.400 0 0 0-2.300-1.100L12 3v3.700z" fill="#fbbc04" /></svg>
      } />
      <Bookmark w={60} label="YouTube" icon={
        <svg viewBox="0 0 16 16" className="size-4"><rect y="2.300" width="16" height="11.500" rx="2.800" fill="#f00" /><path d="m6.500 5.700 4 2.300-4 2.300z" fill="#fff" /></svg>
      } />
      <Bookmark w={37} label="Maps" icon={
        <svg viewBox="0 0 16 16" className="size-4"><rect x="1" y="2" width="13" height="13" rx="1" fill="#cdd3d8" /><path d="M1 3a1 1 0 0 1 1-1h8L1 11z" fill="#23a455" /><path d="m1 14 12-11 1 1-10 11H2z" fill="#fbc02d" /><path d="m6 15 4-4 4 4z" fill="#4285f4" /><path d="M12 10c-.5-2-3-3.200-3-5.800a3 3 0 0 1 6 0C15 6.800 12.500 8 12 10z" fill="#ea2a3a" /><circle cx="12" cy="4.200" r="1.100" fill="#7d1620" /><circle cx="4" cy="5" r="1.500" fill="none" stroke="#fff" /></svg>
      } />
      <Bookmark w={113} label="4. Load Balanc…" icon={
        <svg viewBox="0 0 16 16" className="size-4" fill="none" stroke="#ee0f2b" strokeWidth="2.400"><path d="M.5 5H3a2.700 2.700 0 0 1 0 5.600H.5M8 4v4.600a1.900 1.900 0 0 0 3.700.4V4.500M11.700 8.600a1.600 1.600 0 0 0 3.200 0V4" /></svg>
      } />
      <Bookmark w={110} label="Records | DNS…" icon={
        <svg viewBox="0 0 16 16" className="size-4"><path d="M0 11.500c0-1.300.9-2.100 2-2.100.1-1.100 1.300-1.600 2.100-1C5 6 6.500 4.800 8.300 4.800c2.200 0 3.300 1.600 3.500 3.200l-.8 3.500z" fill="#f6821f" /><path d="m11.500 11.500.8-3.200c2.100-.2 3.600 1.200 3.700 3.200z" fill="#fbad41" /></svg>
      } />
      <Bookmark w={113} label="IDCloudHost.c…" icon={<CloudHost />} mr="mr-[17px]" />
      <Bookmark w={107} label="Dockerizing a…" icon={
        <svg viewBox="0 0 16 16" className="size-4"><rect width="16" height="16" rx="4" fill="#15171a" /><circle cx="8" cy="8" r="5.800" fill="none" stroke="#fff" strokeWidth="1.300" /><circle cx="8" cy="8" r="4.200" fill="#15171a" /></svg>
      } />
      <Bookmark w={112} label="deployment/d…" icon={<Oct d={P.github} className="size-4 fill-[#24292f]" />} />
      <Bookmark w={114} label="IDCloudHost.c…" icon={<CloudHost />} />
      <svg viewBox="0 0 9 7" className="ml-auto mr-[19px] h-[7px] w-[9px]"><path d="m.8.5 3 3-3 3M5 .5l3 3-3 3" fill="none" stroke="#444" strokeWidth="1.500" /></svg>
    </div>
  );
}

const navText = "pt-px text-[12.6px] leading-[18px] text-[#24292f]";

function NavItem({ d, label, gap, pad }: { d: string; label: string; gap: string; pad: string }) {
  return (
    <div className={`flex items-center ${gap} ${pad}`}>
      <div className="pt-px"><Oct d={d} /></div>
      <span className={navText}>{label}</span>
    </div>
  );
}

const Count = ({ children }: { children: string }) => (
  <span className="ml-[5px] flex h-[18px] min-w-[18px] items-center justify-center rounded-full bg-[#e7e9ec]">{children}</span>
);

function RepoHeader() {
  return (
    <div className="flex h-[101px] shrink-0 flex-col border-b border-[#d8dee4] bg-[#f6f8fa]">
      <div className="flex h-[53px] items-center pl-[29px] pt-px">
        <Oct d={P.lock} />
        <div className="ml-[7.200px] flex items-center pt-px text-[18px] leading-[27px] text-[#2050d8]">
          <span>ilhamdwik</span>
          <span className="mx-[3.600px] text-[#57606a]">/</span>
          <span className="font-bold">wayshub-frontend</span>
        </div>
        <div className="ml-[7.200px] mt-px flex h-[18px] w-[48px] items-center justify-center rounded-full border border-[#d0d7de] text-[10.8px] text-[#57606a]">Private</div>
        <div className="ml-auto mr-[29px] flex items-center pt-[4px] text-[10.8px] text-[#24292f]">
          <div className="flex h-[26px] w-[120px] items-center rounded-[5px] border border-[#d3d9de] pl-[10px]">
            <Oct d={P.eye} />
            <span className="ml-[3px]">Unwatch</span>
            <Count>1</Count>
            <div className="ml-[8px]"><Caret /></div>
          </div>
          <div className="ml-[7px] flex h-[26px] w-[120px] items-center rounded-[5px] border border-[#d3d9de] text-[#8c959f]">
            <div className="flex h-full w-[89px] items-center border-r border-[#d3d9de] pl-[11px]">
              <Oct d={P.fork} className="size-[14.4px] fill-[#8c959f]" />
              <span className="ml-[7px]">Fork</span>
              <Count>0</Count>
            </div>
            <div className="ml-[11px] mt-[2px]"><Caret className="border-t-[#57606a]" /></div>
          </div>
          <div className="ml-[11px] flex h-[26px] w-[121px] items-center rounded-[5px] border border-[#d3d9de]">
            <div className="flex h-full w-[90px] items-center border-r border-[#d3d9de] pl-[11px]">
              <Oct d={P.star} />
              <span className="ml-[10px]">Star</span>
              <Count>0</Count>
            </div>
            <div className="ml-[11px] mt-[2px]"><Caret className="border-t-[#57606a]" /></div>
          </div>
        </div>
      </div>
      <div className="flex h-[47px] items-center pl-[36px] pt-[3px]">
        <NavItem d={P.code} label="Code" gap="gap-[8px]" pad="w-[75px]" />
        <NavItem d={P.issue} label="Issues" gap="gap-[8px]" pad="w-[82px]" />
        <NavItem d={P.pull} label="Pull requests" gap="gap-[10px]" pad="w-[108px]" />
        <span className="mt-px flex h-[19px] w-[19px] items-center justify-center rounded-full bg-[#e8ebf0] text-[10.8px] text-[#24292f]">4</span>
        <div className="w-[21px]" />
        <NavItem d={P.play} label="Actions" gap="gap-[9.500px]" pad="w-[90px]" />
        <NavItem d={P.table} label="Projects" gap="gap-[9px]" pad="w-[92px]" />
        <NavItem d={P.shield} label="Security" gap="gap-[9.500px]" pad="w-[79px]" />
        <span className="mt-px flex h-[19px] w-[31px] items-center justify-center rounded-full bg-[#e8ebf0] text-[10.8px] text-[#24292f]">144</span>
        <div className="w-[21px]" />
        <NavItem d={P.graph} label="Insights" gap="gap-[9.500px]" pad="w-[85px]" />
        <div className="relative flex h-[44px] w-[85px] items-center gap-[7px] pl-[7px]">
          <div className="pt-px"><Oct d={P.gear} /></div>
          <span className="pt-px text-[12.6px] font-bold leading-[18px] text-[#24292f]">Settings</span>
          <div className="absolute -bottom-px left-0 h-[2px] w-full bg-[#fd8072]" />
        </div>
      </div>
    </div>
  );
}

function Sidebar() {
  return (
    <div className="ml-[88px] flex w-[280px] shrink-0 flex-col pt-[21px]">
      <SideItem d={P.gear} label="General" />
      <div className="h-[7px] shrink-0" />
      <Sep />
      <div className="h-[14.500px] shrink-0" />
      <SideHead>Access</SideHead>
      <div className="h-[8.400px] shrink-0" />
      <SideItem d={P.people} label="Collaborators" />
      <div className="h-[6.600px] shrink-0" />
      <Sep />
      <div className="h-[15px] shrink-0" />
      <SideHead>Code and automation</SideHead>
      <div className="h-[8px] shrink-0" />
      <SideItem d={P.branch} label="Branches" />
      <SideItem d={P.tag} label="Tags" />
      <SideItem d={P.play} label="Actions" open />
      <SideItem d={P.webhook} label="Webhooks" active />
      <SideItem d={P.codespaces} label="Codespaces" />
      <SideItem d={P.browser} label="Pages" />
      <div className="h-[7px] shrink-0" />
      <Sep />
      <div className="h-[14.500px] shrink-0" />
      <SideHead>Security</SideHead>
      <div className="h-[8.200px] shrink-0" />
      <SideItem d={P.codescan} label="Code security and analysis" />
      <SideItem d={P.key} label="Deploy keys" />
      <SideItem d={P.asterisk} label="Secrets" open />
      <div className="h-[6.800px] shrink-0" />
      <Sep />
      <div className="h-[14.200px] shrink-0" />
      <SideHead>Integrations</SideHead>
      <div className="mt-[17px] flex shrink-0 gap-[2px] pl-[16px]">
        <div className="h-2 w-[4px] border border-[#9aa0a8]" />
        <div className="h-2 w-[4px] border border-[#9aa0a8]" />
      </div>
    </div>
  );
}

function Main() {
  return (
    <div className="ml-[6px] w-[709px] shrink-0">
      <div className="mx-[9px] flex h-[62px] items-center border-b border-[#d8dee4] pt-[14px] text-[21.600px] leading-[32px] text-[#24292f]">
        <span className="text-[#2050d8]">Webhooks /</span>
        <span className="-ml-[0.500px]">&nbsp;Manage webhook</span>
      </div>
      <div className="mx-[9px] mt-[15px] flex h-[36px] border-b border-[#d0d7de] text-[12.6px] leading-[18px]">
        <div className="flex w-[76px] items-center justify-center text-[#57606a]">Settings</div>
        <div className="-mb-px flex h-[36px] w-[130px] items-center justify-center rounded-t-[5px] border border-b-0 border-[#d0d7de] bg-white pb-[2px] text-[#24292f]">
          Recent Deliveries
        </div>
      </div>
      <div className="mt-[13.400px]">
        {deliveries.map((r, i) => (
          <div key={r.id} className={`flex h-[39.670px] items-center pl-[11px] ${i < deliveries.length - 1 ? "border-b border-[#cbd3db]" : ""}`}>
            <Oct d={r.ok ? P.check : P.alert} className={r.ok ? "size-[14.4px] fill-[#12883c] -mt-[3px]" : "size-[14.4px] fill-[#d3122b] -mt-[2px]"} />
            <div className="ml-[2.600px] flex h-[24px] w-[272px] items-center rounded-[5px] bg-[#daf4ff] pl-[8px] font-['Liberation_Mono',monospace] text-[10.8px] leading-[16px] text-[#57606a]">
              <Oct d={P.box} className="size-[14.4px] fill-[#57606a] -mt-[3px]" />
              <span className="ml-[13.200px] -mt-[2px]">{r.id}</span>
            </div>
            <div className="ml-[4px] flex h-[24px] w-[33px] items-center justify-center rounded-[5px] bg-[#daf4ff] font-['Liberation_Mono',monospace] text-[10.8px] leading-[16px] text-[#57606a]">
              <span className="-mt-[2px]">{r.ev}</span>
            </div>
            <span className="-mt-[3px] ml-auto text-[10.8px] leading-[16px] text-[#57606a]">{r.at}</span>
            <div className="-mt-[3px] ml-[7px] mr-[7px] flex h-[11px] w-[20px] items-center justify-center gap-[2px] bg-[#f0f1f3] pb-px">
              <div className="size-[2px] bg-[#24292f]" />
              <div className="size-[2px] bg-[#24292f]" />
              <div className="size-[2px] bg-[#24292f]" />
            </div>
          </div>
        ))}
      </div>
    </div>
  );
}

export default function App() {
  return (
    <div className="flex h-[768px] w-[1366px] flex-col overflow-hidden bg-white font-['Noto_Sans','Open_Sans',sans-serif]">
      <TopBar />
      <div className="flex min-h-0 grow">
        <Dock />
        <div className="flex min-w-0 grow flex-col">
          <TabStrip />
          <Toolbar />
          <Bookmarks />
          <div className="h-px shrink-0 bg-[#cfcecc]" />
          <div className="flex min-h-0 grow font-['Liberation_Sans',Arial,sans-serif]">
            <div className="flex w-[1284px] flex-col overflow-hidden border-t border-[#1f2328]">
              <RepoHeader />
              <div className="flex min-h-0 grow overflow-hidden">
                <Sidebar />
                <Main />
              </div>
            </div>
            <div className="flex w-[15px] flex-col items-center bg-[#f1f1f1]">
              <div className="mt-[6px] h-0 w-0 border-x-[4px] border-b-[4px] border-x-transparent border-b-[#505050]" />
              <div className="mt-[41px] h-[438px] w-[11px] bg-[#c1c1c1]" />
              <div className="mb-[6px] mt-auto h-0 w-0 border-x-[4px] border-t-[4px] border-x-transparent border-t-[#505050]" />
            </div>
          </div>
        </div>
      </div>
    </div>
  );
}
